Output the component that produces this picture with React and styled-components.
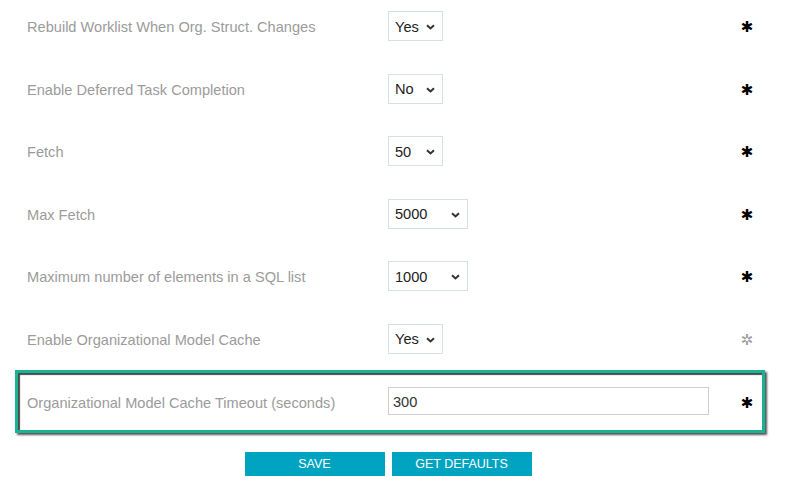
import React from "react";
import styled, { createGlobalStyle } from "styled-components";

const GlobalStyle = createGlobalStyle`
  html, body { margin: 0; padding: 0; background: #ffffff; }
  body { font-family: "Liberation Sans", Arial, sans-serif; overflow: hidden; }
  * { box-sizing: border-box; }
`;

const Page = styled.div`
  width: 786px;
  height: 488px;
  padding: 0 21px 0 15px;
  margin-top: -5px;
`;

const Row = styled.div`
  display: grid;
  grid-template-columns: 361px 1fr 20px;
  align-items: center;
  height: ${(p) => (p.$highlight ? "63px" : "62.5px")};
  padding-left: ${(p) => (p.$highlight ? "9px" : "12px")};
  padding-right: ${(p) => (p.$highlight ? "5px" : "8px")};
  border: ${(p) => (p.$highlight ? "3px solid #18b294" : "none")};
  box-shadow: ${(p) =>
    p.$highlight
      ? "inset 2px 2px 1px #4a4a4a, 2px 2px 2px #555555"
      : "none"};
`;

const Label = styled.span`
  grid-column: 1;
  font-size: 14.6px;
  color: #9b9b9b;
  white-space: nowrap;
  margin-top: 2px;
`;

const Field = styled.div`
  grid-column: 2;
  display: flex;
  align-items: center;
`;

const SelectWrap = styled.div`
  position: relative;
  width: ${(p) => p.$w}px;
  height: 30px;
`;

const Select = styled.select`
  appearance: none;
  -webkit-appearance: none;
  width: 100%;
  height: 100%;
  border: 1px solid #d5dfeb;
  border-radius: 0;
  background: #ffffff;
  padding: 1px 0 0 6px;
  font-family: "Liberation Sans", Arial, sans-serif;
  font-size: 14.6px;
  color: #222222;
  outline: none;
`;

const Chevron = styled.svg`
  position: absolute;
  right: 8px;
  top: 50%;
  margin-top: -2px;
  width: 9px;
  height: 6px;
  pointer-events: none;
`;

const TextInput = styled.input`
  width: 321px;
  height: 28px;
  border: 1px solid #cfcfcf;
  padding: 1px 4px 0;
  font-family: "Liberation Sans", Arial, sans-serif;
  font-size: 14.6px;
  color: #333333;
  outline: none;
  margin-top: -1px;
`;

const Star = styled.span`
  grid-column: 3;
  justify-self: center;
  font-family: "DejaVu Sans", sans-serif;
  font-size: ${(p) => (p.$open ? "15px" : "15px")};
  line-height: 1;
  color: ${(p) => (p.$open ? "#999999" : "#000000")};
  font-weight: ${(p) => (p.$open ? "normal" : "bold")};
  margin-top: 3px;
`;

const Buttons = styled.div`
  display: flex;
  justify-content: center;
  gap: 7px;
  margin-top: 19px;
  padding-right: 4px;
`;

const Button = styled.button`
  width: 140px;
  height: 24px;
  border: none;
  border-radius: 0;
  background: #00a4c1;
  color: #ffffff;
  font-family: "Liberation Sans", Arial, sans-serif;
  font-size: 12.5px;
  text-transform: uppercase;
  padding: 0;
  cursor: pointer;
`;

const rows = [
  { label: "Rebuild Worklist When Org. Struct. Changes", value: "Yes", options: ["Yes", "No"], w: 55 },
  { label: "Enable Deferred Task Completion", value: "No", options: ["Yes", "No"], w: 55 },
  { label: "Fetch", value: "50", options: ["50", "100"], w: 55 },
  { label: "Max Fetch", value: "5000", options: ["5000", "10000"], w: 80 },
  { label: "Maximum number of elements in a SQL list", value: "1000", options: ["1000", "2000"], w: 80 },
  { label: "Enable Organizational Model Cache", value: "Yes", options: ["Yes", "No"], w: 55, open: true },
];

function Dropdown({ value, options, w }) {
  return (
    <SelectWrap $w={w}>
      <Select defaultValue={value}>
        {options.map((o) => (
          <option key={o} value={o}>
            {o}
          </option>
        ))}
      </Select>
      <Chevron viewBox="0 0 9 6">
        <path d="M1 1.2 L4.5 4.5 L8 1.2" fill="none" stroke="#333" strokeWidth="2" />
      </Chevron>
    </SelectWrap>
  );
}

export default function App() {
  return (
    <>
      <GlobalStyle />
      <Page>
        {rows.map((r) => (
          <Row key={r.label}>
            <Label>{r.label}</Label>
            <Field>
              <Dropdown value={r.value} options={r.options} w={r.w} />
            </Field>
            <Star $open={r.open}>{r.open ? "✲" : "✱"}</Star>
          </Row>
        ))}
        <Row $highlight>
          <Label>Organizational Model Cache Timeout (seconds)</Label>
          <Field>
            <TextInput defaultValue="300" />
          </Field>
          <Star>✱</Star>
        </Row>
        <Buttons>
          <Button>Save</Button>
          <Button>Get Defaults</Button>
        </Buttons>
      </Page>
    </>
  );
}
